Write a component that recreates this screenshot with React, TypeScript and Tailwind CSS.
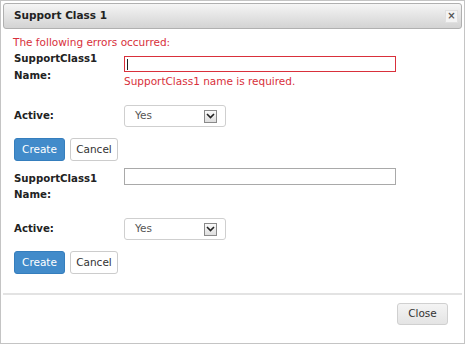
import React from "react";

const font = { fontFamily: '"DejaVu Sans", Verdana, sans-serif' };

function SelectBox() {
  return (
    <div className="w-[102px] h-[22px] border border-[#cfcfcf] rounded-[3px] bg-white flex items-center justify-between pl-[10px] pr-[8px] text-[10.5px] text-[#555]">
      <span>Yes</span>
      <div className="w-[13px] h-[13px] border border-[#8a8a8a] bg-gradient-to-b from-[#fafafa] to-[#dedede] flex items-center justify-center">
        <svg width="9" height="6" viewBox="0 0 9 6">
          <path d="M1 1 L4.5 4.5 L8 1" fill="none" stroke="#222" strokeWidth="1.6" />
        </svg>
      </div>
    </div>
  );
}

function Buttons() {
  return (
    <div className="flex gap-[5px]">
      <button className="w-[51px] h-[23px] rounded-[3px] bg-[#428bca] border border-[#357ebd] text-white text-[10.5px]">
        Create
      </button>
      <button className="w-[48px] h-[23px] rounded-[3px] bg-white border border-[#cccccc] text-[#333] text-[10.5px]">
        Cancel
      </button>
    </div>
  );
}

export default function App() {
  return (
    <div
      style={font}
      className="w-[465px] h-[344px] border border-[#c4c4c4] p-[2px] flex flex-col bg-white text-[#222]"
    >
      <div className="h-[26px] shrink-0 border border-[#b0b0b0] rounded-[3px] bg-gradient-to-b from-[#f5f5f5] to-[#d3d3d3] flex items-center justify-between pl-[10px] pr-[3px]">
        <span className="font-bold text-[10.5px] text-[#222]">Support Class 1</span>
        <div className="w-[13px] h-[13px] bg-[#f3f3f3] border border-[#e0e0e0] flex items-center justify-center text-[10px] font-bold text-[#555] leading-none">
          ×
        </div>
      </div>

      <div className="flex-1 pl-[11px] pt-[7px]">
        <div className="text-[10.5px] leading-[12px] text-[#d8303b] -ml-px">The following errors occurred:</div>

        <div className="flex mt-[3px]">
          <div className="w-[110px] font-bold text-[10.2px] leading-[16px]">
            SupportClass1
            <br />
            <span className="leading-[17px]">Name:</span>
          </div>
          <div className="pt-[5px]">
            <div className="w-[272px] h-[16px] border border-[#d9303b] bg-white flex items-center pl-[2px]">
              <div className="w-px h-[11px] bg-[#222]" />
            </div>
            <div className="text-[10.5px] leading-[14px] mt-[2px] text-[#d8303b]">
              SupportClass1 name is required.
            </div>
          </div>
        </div>

        <div className="flex items-center mt-[17px]">
          <div className="w-[110px] font-bold text-[10.2px]">Active:</div>
          <SelectBox />
        </div>

        <div className="mt-[11px]">
          <Buttons />
        </div>

        <div className="flex mt-[7px]">
          <div className="w-[110px] font-bold text-[10.2px] leading-[16px] pt-[3px]">
            SupportClass1
            <br />
            Name:
          </div>
          <div className="w-[272px] h-[17px] border border-[#a9a9a9] bg-white" />
        </div>

        <div className="flex items-center mt-[15px]">
          <div className="w-[110px] font-bold text-[10.2px]">Active:</div>
          <SelectBox />
        </div>

        <div className="mt-[11px]">
          <Buttons />
        </div>
      </div>

      <div className="h-[48px] shrink-0 border-t-2 border-[#e3e3e3] flex justify-end items-start pt-[8px] pr-[14px]">
        <button className="w-[51px] h-[22px] rounded-[3px] border border-[#d0d0d0] bg-gradient-to-b from-[#f4f4f4] to-[#e4e4e4] text-[10.5px] text-[#333]">
          Close
        </button>
      </div>
    </div>
  );
}
